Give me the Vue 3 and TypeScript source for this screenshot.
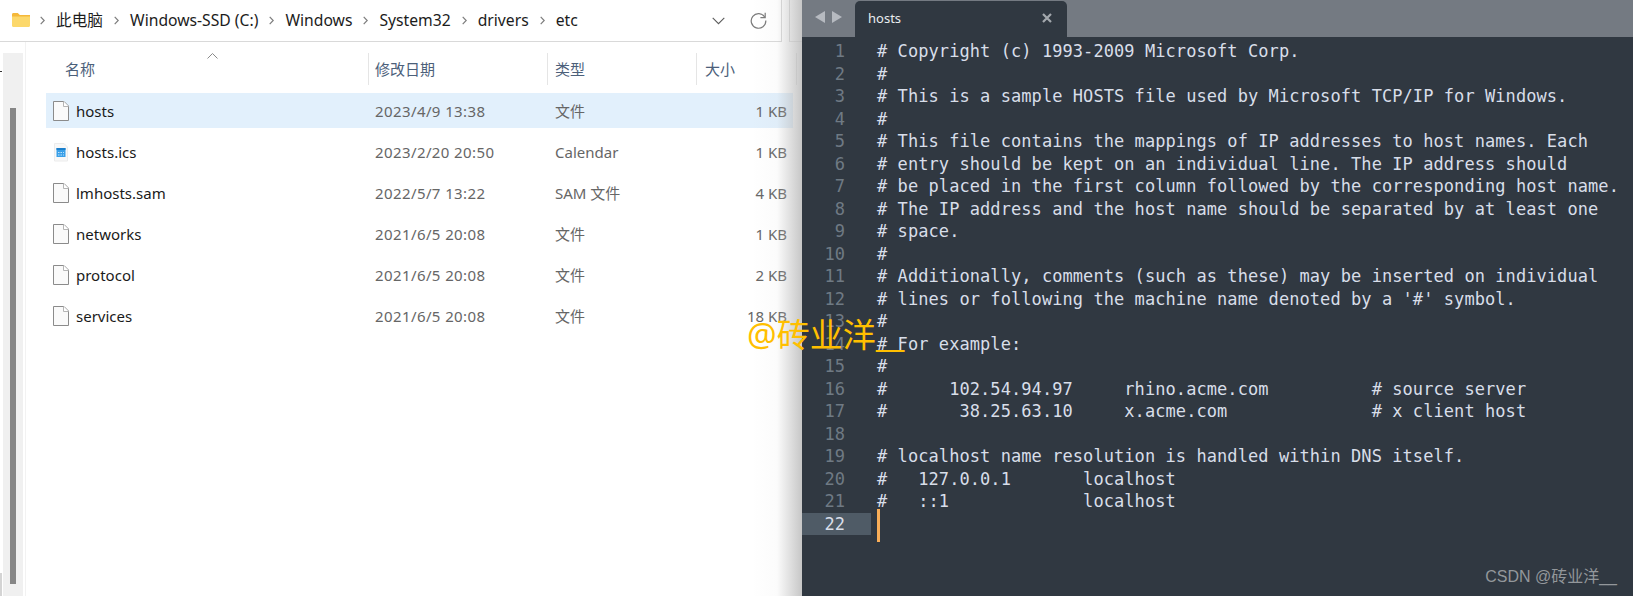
<script setup lang="ts">
interface FileRow { name: string; date: string; type: string; size: string; icon: 'file' | 'cal'; selected?: boolean }

const crumbs: string[] = ['此电脑', 'Windows-SSD (C:)', 'Windows', 'System32', 'drivers', 'etc']

const columns = [
  { label: '名称', cls: 'c-name' },
  { label: '修改日期', cls: 'c-date' },
  { label: '类型', cls: 'c-type' },
  { label: '大小', cls: 'c-size' },
]

const files: FileRow[] = [
  { name: 'hosts', date: '2023/4/9 13:38', type: '文件', size: '1 KB', icon: 'file', selected: true },
  { name: 'hosts.ics', date: '2023/2/20 20:50', type: 'Calendar', size: '1 KB', icon: 'cal' },
  { name: 'lmhosts.sam', date: '2022/5/7 13:22', type: 'SAM 文件', size: '4 KB', icon: 'file' },
  { name: 'networks', date: '2021/6/5 20:08', type: '文件', size: '1 KB', icon: 'file' },
  { name: 'protocol', date: '2021/6/5 20:08', type: '文件', size: '2 KB', icon: 'file' },
  { name: 'services', date: '2021/6/5 20:08', type: '文件', size: '18 KB', icon: 'file' },
]

const lines: string[] = [
  '# Copyright (c) 1993-2009 Microsoft Corp.',
  '#',
  '# This is a sample HOSTS file used by Microsoft TCP/IP for Windows.',
  '#',
  '# This file contains the mappings of IP addresses to host names. Each',
  '# entry should be kept on an individual line. The IP address should',
  '# be placed in the first column followed by the corresponding host name.',
  '# The IP address and the host name should be separated by at least one',
  '# space.',
  '#',
  '# Additionally, comments (such as these) may be inserted on individual',
  '# lines or following the machine name denoted by a \'#\' symbol.',
  '#',
  '# For example:',
  '#',
  '#      102.54.94.97     rhino.acme.com          # source server',
  '#       38.25.63.10     x.acme.com              # x client host',
  '',
  '# localhost name resolution is handled within DNS itself.',
  '#   127.0.0.1       localhost',
  '#   ::1             localhost',
  '',
]
</script>

<template>
  <div class="root">
    <section class="explorer">
      <header class="toolbar">
        <div class="addr">
          <svg class="folder" width="18" height="14" viewBox="0 0 18 14">
            <path d="M0 1.500C0 .7.6 0 1.400 0h4.400l2 2H18v2H0z" fill="#f5b83a" />
            <path d="M0 3.600h18v9.200c0 .7-.5 1.200-1.200 1.200H1.200C.5 14 0 13.500 0 12.800z" fill="#fcd86b" />
          </svg>
          <template v-for="c in crumbs" :key="c">
            <svg class="sep" width="5" height="9" viewBox="0 0 5 9">
              <path d="M.7.8l3.500 3.700L.7 8.200" fill="none" stroke="#7d7d7d" stroke-width="1.200" />
            </svg>
            <span class="crumb">{{ c }}</span>
          </template>
          <span class="grow"></span>
          <svg class="chev" width="13" height="8" viewBox="0 0 13 8">
            <path d="M.7.8l5.800 5.800L12.300.8" fill="none" stroke="#5c5c5c" stroke-width="1.100" />
          </svg>
          <svg class="refresh" width="17" height="17" viewBox="0 0 17 17">
            <path d="M14.800 5.200A7.300 7.300 0 1 0 15.800 8.500" fill="none" stroke="#7a7a7a" stroke-width="1.200" />
            <path d="M15.200 .8v4.800h-4.800" fill="none" stroke="#7a7a7a" stroke-width="1.200" />
          </svg>
        </div>
        <div class="search"></div>
      </header>

      <div class="body">
        <div class="track"><div class="thumb"></div></div>
        <div class="list">
          <div class="heads">
            <svg class="sort" width="11" height="6" viewBox="0 0 11 6">
              <path d="M.5 5.500l5-5 5 5" fill="none" stroke="#8a8a8a" stroke-width="1" />
            </svg>
            <div v-for="col in columns" :key="col.label" class="head" :class="col.cls">{{ col.label }}</div>
          </div>
          <div class="rows">
            <div v-for="f in files" :key="f.name" class="row" :class="{ selected: f.selected }">
              <div class="c-name cell-name">
                <svg v-if="f.icon === 'file'" class="ficon" width="16" height="20" viewBox="0 0 16 20">
                  <path d="M.5.500h10.500l4.500 4.500v14.500H.5z" fill="#fafafa" stroke="#8b8b8b" />
                  <path d="M10.500.5v5h5" fill="#fff" stroke="#b5b5b5" />
                </svg>
                <svg v-else class="ficon" width="16" height="20" viewBox="0 0 16 20">
                  <path d="M1.500 1.500h9.500l3.500 3.500v14H1.500z" fill="#f8f8f8" stroke="#ececec" />
                  <rect x="3.500" y="6" width="9" height="9" fill="#3aa0e8" />
                  <rect x="3.500" y="6" width="9" height="2" fill="#1a7fcc" />
                  <path d="M5 10.500h6M5 13h6" stroke="#bfe2fa" stroke-width="1" stroke-dasharray="1.500 1" />
                </svg>
                <span class="fname">{{ f.name }}</span>
              </div>
              <div class="c-date meta date">{{ f.date }}</div>
              <div class="c-type meta">{{ f.type }}</div>
              <div class="c-size meta size">{{ f.size }}</div>
            </div>
          </div>
        </div>
      </div>
      <div class="shade"></div>
      <i class="edge-tick"></i>
      <i class="edge-corner"></i>
    </section>

    <section class="editor">
      <header class="tabbar">
        <div class="arrows">
          <svg width="10" height="12" viewBox="0 0 10 12"><path d="M10 0v12L0 6z" fill="#b6bac0" /></svg>
          <svg width="10" height="12" viewBox="0 0 10 12"><path d="M0 0v12l10-6z" fill="#b6bac0" /></svg>
        </div>
        <div class="tab">
          <span class="tab-title">hosts</span>
          <svg width="10" height="10" viewBox="0 0 10 10">
            <path d="M1 1l8 8M9 1l-8 8" stroke="#a3a8ad" stroke-width="2.200" />
          </svg>
        </div>
      </header>
      <div class="code">
        <div v-for="(line, i) in lines" :key="i" class="line">
          <span class="num" :class="{ current: i === 21 }">{{ i + 1 }}</span>
          <span class="text">{{ line }}<i v-if="i === 21" class="caret"></i></span>
        </div>
      </div>
    </section>

    <div class="mark">@砖业洋<span class="under">__</span></div>
    <div class="credit">CSDN @砖业洋__</div>
  </div>
</template>

<style scoped>
.root {
  position: relative;
  display: flex;
  width: 1633px;
  height: 596px;
  overflow: hidden;
  background: #fff;
  font-family: "Noto Sans", "Noto Sans CJK SC", sans-serif;
}
.explorer {
  position: relative;
  flex: 0 0 802px;
  display: flex;
  flex-direction: column;
}
.edge-tick {
  position: absolute;
  left: 0;
  top: 71px;
  width: 2px;
  height: 1px;
  background: #333;
}
.edge-corner {
  position: absolute;
  left: 0;
  top: 573px;
  width: 2px;
  height: 23px;
  background: #d4d4d4;
}
.toolbar {
  display: flex;
  flex: 0 0 42px;
  gap: 7px;
}
.addr {
  flex: 0 0 782px;
  display: flex;
  align-items: center;
  box-sizing: border-box;
  border: 1px solid #d9d9d9;
  border-width: 0 1px 1px 0;
  padding: 0 14px 2px 12px;
  font-size: 15.700px;
  color: #1c1c1c;
}
.folder { margin-right: 10px; }
.sep { margin: 2px 11px 0 11px; }
.folder + .sep { margin-left: 0; }
.crumb { line-height: 20px; }
.grow { flex: 1; }
.chev { margin: 2px 25px 0 0; }
.refresh { margin-top: 2px; }
.search {
  flex: 1;
  border-left: 1px solid #dcdcdc;
  border-bottom: 1px solid #e4e4e4;
}
.body { flex: 1; display: flex; }
.track {
  flex: 0 0 20px;
  margin: 11px 0 0 3px;
  background: #f0f0f0;
  box-sizing: border-box;
  padding: 55px 7px 12px 7px;
}
.thumb { width: 6px; height: 100%; background: #868686; }
.list {
  flex: 1;
  margin-left: 2px;
  border-left: 1px solid #f2f2f2;
  padding-left: 20px;
  box-sizing: border-box;
}
.heads {
  position: relative;
  display: flex;
  height: 32px;
  margin-top: 11px;
}
.sort { position: absolute; left: 161px; top: 0; }
.head {
  font-size: 15px;
  line-height: 32px;
  color: #4c607a;
  box-sizing: border-box;
  border-right: 1px solid #e5e5e5;
  padding-left: 8px;
}
.c-name { flex: 0 0 321px; }
.c-date { flex: 0 0 181px; padding-left: 8px; box-sizing: border-box; }
.c-type { flex: 0 0 149px; padding-left: 7px; box-sizing: border-box; }
.c-size { flex: 0 0 100px; box-sizing: border-box; }
.heads .c-name { padding-left: 19px; flex-basis: 323px; }
.heads .c-date { padding-left: 6px; flex-basis: 179px; }
.heads .c-type { padding-left: 7px; }
.rows {
  display: flex;
  flex-direction: column;
  gap: 6px;
  margin-top: 8px;
}
.row {
  display: flex;
  align-items: center;
  height: 35px;
  width: 747px;
  font-size: 15px;
}
.selected { background: #e2f0fc; }
.cell-name { display: flex; align-items: center; box-sizing: border-box; padding-left: 7px; }
.ficon { margin-right: 7px; }
.fname { color: #1a1a1a; }
.meta { color: #666; }
.date { letter-spacing: .4px; }
.row .c-size { flex: 0 0 96px; }
.size { text-align: right; padding-right: 6px; }
.shade {
  position: absolute;
  top: 0;
  right: 0;
  bottom: 0;
  width: 50px;
  background: linear-gradient(to right, rgba(190,190,190,0), rgba(190,190,190,.06) 50%, rgba(180,180,180,.75));
  pointer-events: none;
}
.editor {
  flex: 1;
  display: flex;
  flex-direction: column;
  background: #303841;
}
.tabbar {
  flex: 0 0 37px;
  display: flex;
  background: #747a82;
}
.arrows {
  flex: 0 0 53px;
  display: flex;
  gap: 7px;
  align-items: center;
  padding: 0 0 3px 13px;
  box-sizing: border-box;
}
.tab {
  flex: 0 0 212px;
  margin-top: 1px;
  border-radius: 5px 5px 0 0;
  background: #303841;
  display: flex;
  align-items: center;
  justify-content: space-between;
  padding: 0 15px 3px 13px;
  box-sizing: border-box;
  color: #e9ecef;
}
.tab-title { font-size: 13px; }
.code {
  padding-top: 3px;
  font-family: "DejaVu Sans Mono", monospace;
  font-size: 17px;
  letter-spacing: .07px;
  line-height: 22.500px;
  color: #d8dee9;
}
.line { display: flex; height: 22.500px; }
.num {
  flex: 0 0 69px;
  box-sizing: border-box;
  padding-right: 26px;
  text-align: right;
  color: #6f7a84;
}
.num.current { background: #4f5b66; color: #d8dee9; }
.text { position: relative; margin-left: 6px; white-space: pre; }
.caret {
  position: absolute;
  left: 0;
  top: -4px;
  width: 3px;
  height: 33px;
  background: #f9ae58;
}
.mark {
  position: absolute;
  left: 747px;
  top: 313px;
  font-size: 33px;
  line-height: 44px;
  color: #ffbf00;
  white-space: nowrap;
}
.under { letter-spacing: -.5px; }
.credit {
  position: absolute;
  right: 16px;
  top: 567px;
  font-family: "Liberation Sans", "Noto Sans CJK SC", sans-serif;
  font-size: 16px;
  line-height: 20px;
  color: #93979b;
}
</style>
